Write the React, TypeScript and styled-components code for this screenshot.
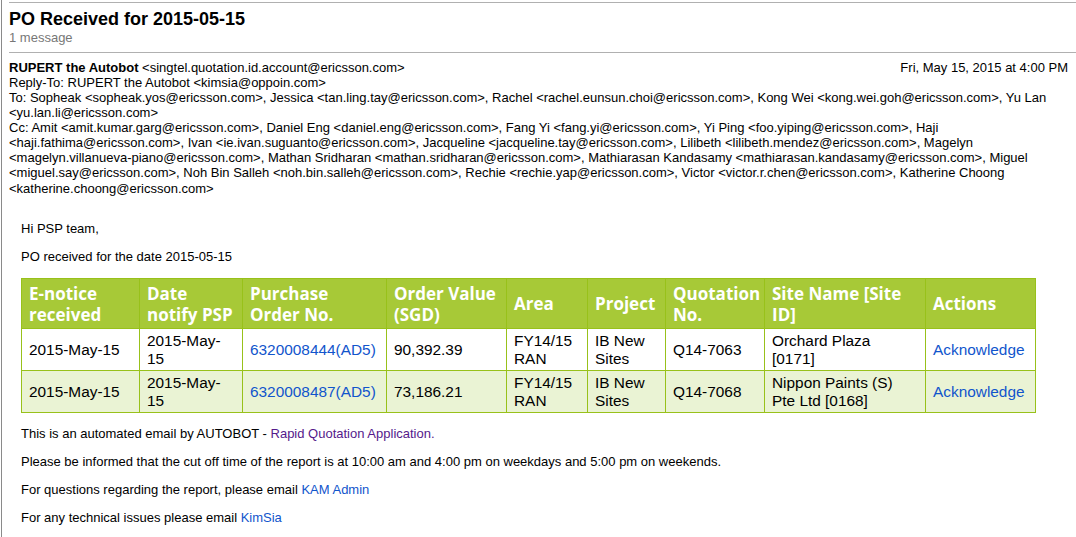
import React from 'react';
import styled, { createGlobalStyle } from 'styled-components';

const GlobalStyle = createGlobalStyle`
	html, body {
		margin: 0;
		padding: 0;
		background: #fff;
	}
	body {
		font-family: "Liberation Sans", Arial, sans-serif;
		color: #000;
	}
`;

interface IOrder {
	received: string
	notified: string
	poNumber: string
	value: string
	area: string
	project: string
	quotation: string
	site: string
}

const orders: IOrder[] = [
	{
		received: '2015-May-15',
		notified: '2015-May-15',
		poNumber: '6320008444(AD5)',
		value: '90,392.39',
		area: 'FY14/15 RAN',
		project: 'IB New Sites',
		quotation: 'Q14-7063',
		site: 'Orchard Plaza [0171]'
	},
	{
		received: '2015-May-15',
		notified: '2015-May-15',
		poNumber: '6320008487(AD5)',
		value: '73,186.21',
		area: 'FY14/15 RAN',
		project: 'IB New Sites',
		quotation: 'Q14-7068',
		site: 'Nippon Paints (S) Pte Ltd [0168]'
	}
];

const columns = [
	{ title: 'E-notice received', width: 118 },
	{ title: 'Date notify PSP', width: 103 },
	{ title: 'Purchase Order No.', width: 144 },
	{ title: 'Order Value (SGD)', width: 120 },
	{ title: 'Area', width: 81 },
	{ title: 'Project', width: 78 },
	{ title: 'Quotation No.', width: 99 },
	{ title: 'Site Name [Site ID]', width: 161 },
	{ title: 'Actions', width: 110 }
];

const Page = styled.div`
	min-height: 537px;
	box-sizing: border-box;
	margin-left: 1px;
	border-left: 1px solid #8a8a8a;
	padding: 2px 0 0 7px;
	font-size: 13px;
	line-height: 15px;
`;

const Rule = styled.div`
	height: 0;
	border-top: 1px solid #b0b0b0;
`;

const TitleBlock = styled.div`
	padding: 6px 8px 7px 0;
`;

const Title = styled.h1`
	margin: 0;
	font-size: 18px;
	line-height: 21px;
	font-weight: bold;
`;

const Count = styled.div`
	color: #777;
`;

const Headers = styled.div`
	padding: 6.5px 8px 0 0;
	line-height: 15.125px;
`;

const FromRow = styled.div`
	display: flex;
	justify-content: space-between;
`;

const Sender = styled.b`
	font-weight: bold;
`;

const Body = styled.div`
	margin: 25px 0 0 12px;
`;

const Para = styled.p`
	margin: 0 0 13px;
`;

const Link = styled.a<{ $visited?: boolean }>`
	color: ${(p) => (p.$visited ? '#551a8b' : '#1155cc')};
	text-decoration: none;
`;

const Table = styled.table`
	width: 1014px;
	table-layout: fixed;
	border-collapse: collapse;
	margin: 14px 0 13px;
	border: 1px solid #98c11a;
`;

const HeadCell = styled.th`
	background: #a7c937;
	color: #fff;
	border: 1px solid #98c11a;
	padding: 4px 7px 3px;
	text-align: left;
	vertical-align: middle;
	font-family: "Open Sans", "DejaVu Sans", sans-serif;
	font-weight: 700;
	font-size: 17px;
	line-height: 21px;
`;

const Row = styled.tr<{ $alt?: boolean }>`
	background: ${(p) => (p.$alt ? '#eaf3d4' : '#fff')};
`;

const Cell = styled.td`
	border: 1px solid #98c11a;
	padding: 3px 8px 2px 7px;
	vertical-align: middle;
	font-size: 15.4px;
	line-height: 18px;
`;

const App: React.FC = () => {
	return (
		<>
			<GlobalStyle />
			<Page>
				<Rule />
				<TitleBlock>
					<Title>PO Received for 2015-05-15</Title>
					<Count>1 message</Count>
				</TitleBlock>
				<Rule />
				<Headers>
					<FromRow>
						<span><Sender>RUPERT the Autobot</Sender> &lt;singtel.quotation.id.account@ericsson.com&gt;</span>
						<span>Fri, May 15, 2015 at 4:00 PM</span>
					</FromRow>
					<div>Reply-To: RUPERT the Autobot &lt;kimsia@oppoin.com&gt;</div>
					<div>To: Sopheak &lt;sopheak.yos@ericsson.com&gt;, Jessica &lt;tan.ling.tay@ericsson.com&gt;, Rachel &lt;rachel.eunsun.choi@ericsson.com&gt;, Kong Wei &lt;kong.wei.goh@ericsson.com&gt;, Yu Lan &lt;yu.lan.li@ericsson.com&gt;</div>
					<div>Cc: Amit &lt;amit.kumar.garg@ericsson.com&gt;, Daniel Eng &lt;daniel.eng@ericsson.com&gt;, Fang Yi &lt;fang.yi@ericsson.com&gt;, Yi Ping &lt;foo.yiping@ericsson.com&gt;, Haji &lt;haji.fathima@ericsson.com&gt;, Ivan &lt;ie.ivan.suguanto@ericsson.com&gt;, Jacqueline &lt;jacqueline.tay@ericsson.com&gt;, Lilibeth &lt;lilibeth.mendez@ericsson.com&gt;, Magelyn &lt;magelyn.villanueva-piano@ericsson.com&gt;, Mathan Sridharan &lt;mathan.sridharan@ericsson.com&gt;, Mathiarasan Kandasamy &lt;mathiarasan.kandasamy@ericsson.com&gt;, Miguel &lt;miguel.say@ericsson.com&gt;, Noh Bin Salleh &lt;noh.bin.salleh@ericsson.com&gt;, Rechie &lt;rechie.yap@ericsson.com&gt;, Victor &lt;victor.r.chen@ericsson.com&gt;, Katherine Choong &lt;katherine.choong@ericsson.com&gt;</div>
				</Headers>
				<Body>
					<Para>Hi PSP team,</Para>
					<Para>PO received for the date 2015-05-15</Para>
					<Table>
						<colgroup>
							{columns.map((c) => <col key={c.title} style={{ width: c.width }} />)}
						</colgroup>
						<thead>
							<tr>
								{columns.map((c) => <HeadCell key={c.title}>{c.title}</HeadCell>)}
							</tr>
						</thead>
						<tbody>
							{orders.map((o, i) => (
								<Row key={o.poNumber} $alt={i % 2 === 1}>
									<Cell>{o.received}</Cell>
									<Cell>{o.notified}</Cell>
									<Cell><Link href='#'>{o.poNumber}</Link></Cell>
									<Cell>{o.value}</Cell>
									<Cell>{o.area}</Cell>
									<Cell>{o.project}</Cell>
									<Cell>{o.quotation}</Cell>
									<Cell>{o.site}</Cell>
									<Cell><Link href='#'>Acknowledge</Link></Cell>
								</Row>
							))}
						</tbody>
					</Table>
					<Para>This is an automated email by AUTOBOT - <Link href='#' $visited>Rapid Quotation Application.</Link></Para>
					<Para>Please be informed that the cut off time of the report is at 10:00 am and 4:00 pm on weekdays and 5:00 pm on weekends.</Para>
					<Para>For questions regarding the report, please email <Link href='#'>KAM Admin</Link></Para>
					<Para>For any technical issues please email <Link href='#'>KimSia</Link></Para>
				</Body>
			</Page>
		</>
	);
};

export default App;
